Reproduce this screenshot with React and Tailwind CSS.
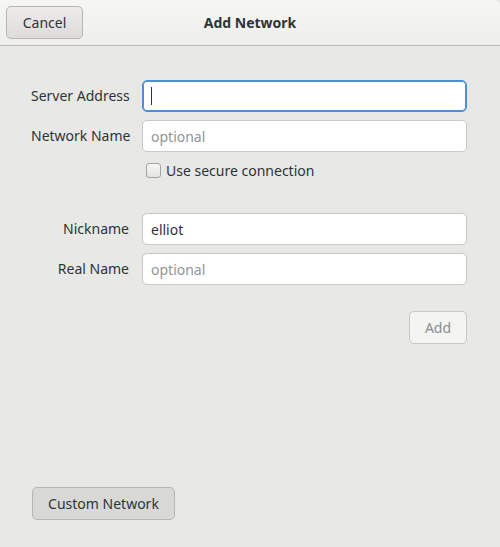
import React from "react";

const font = { fontFamily: '"Noto Sans", "DejaVu Sans", sans-serif' };

function Field({ label, value, placeholder, focused }) {
  return (
    <>
      <label className="text-right text-[14px] leading-[32px] text-[#2e3436] whitespace-nowrap">
        {label}
      </label>
      <div
        className={
          "h-[32px] rounded-[5px] bg-white flex items-center px-[8px] text-[14px] " +
          (focused
            ? "border border-[#4a90d9] shadow-[inset_0_0_0_1px_#4a90d9]"
            : "border border-[#cdc7c2]")
        }
      >
        {focused && <span className="w-px h-[18px] bg-[#2e3436]" />}
        {value && <span className="text-[#2e3436]">{value}</span>}
        {placeholder && <span className="text-[#929595]">{placeholder}</span>}
      </div>
    </>
  );
}

export default function App() {
  return (
    <div style={font} className="w-[500px] h-[547px] bg-[#e8e8e7] flex flex-col overflow-hidden">
      <header className="h-[46px] shrink-0 grid grid-cols-[1fr_auto_1fr] items-center px-[6px] bg-gradient-to-b from-[#f6f6f5] to-[#eeeeed] border-b border-[#b6b6b3] rounded-tr-[6px]">
        <div>
          <button className="w-[77px] h-[33px] rounded-[5px] border border-[#b6b6b3] bg-gradient-to-b from-[#edeceb] to-[#dddcdb] text-[14px] text-[#2e3436]">
            Cancel
          </button>
        </div>
        <h1 className="text-[14px] font-bold text-[#2e3436]">Add Network</h1>
        <div />
      </header>

      <main className="flex-1 flex flex-col pl-[31px] pr-[33px] pt-[34px] pb-[27px]">
        <div className="grid grid-cols-[98px_1fr] gap-x-[13px] gap-y-[8px]">
          <Field label="Server Address" focused />
          <Field label="Network Name" placeholder="optional" />
          <div />
          <div className="h-[20px] flex items-center gap-[5px] pl-[4px]">
            <span className="w-[15px] h-[15px] rounded-[3px] border border-[#a4a4a1] bg-gradient-to-b from-[#f6f6f5] to-[#e4e4e3]" />
            <span className="text-[14px] text-[#2e3436]">Use secure connection</span>
          </div>
        </div>

        <div className="grid grid-cols-[98px_1fr] gap-x-[13px] gap-y-[8px] mt-[33px]">
          <Field label="Nickname" value="elliot" />
          <Field label="Real Name" placeholder="optional" />
        </div>

        <div className="flex justify-end mt-[26px]">
          <button className="w-[58px] h-[33px] rounded-[5px] border border-[#cdc7c2] bg-[#f4f4f2] text-[14px] text-[#8b8e8f]">
            Add
          </button>
        </div>

        <div className="flex-1" />

        <div className="pl-[1px]">
          <button className="w-[143px] h-[33px] rounded-[5px] border border-[#b6b6b3] bg-[#d8d8d7] text-[14px] text-[#2e3436]">
            Custom Network
          </button>
        </div>
      </main>
    </div>
  );
}
